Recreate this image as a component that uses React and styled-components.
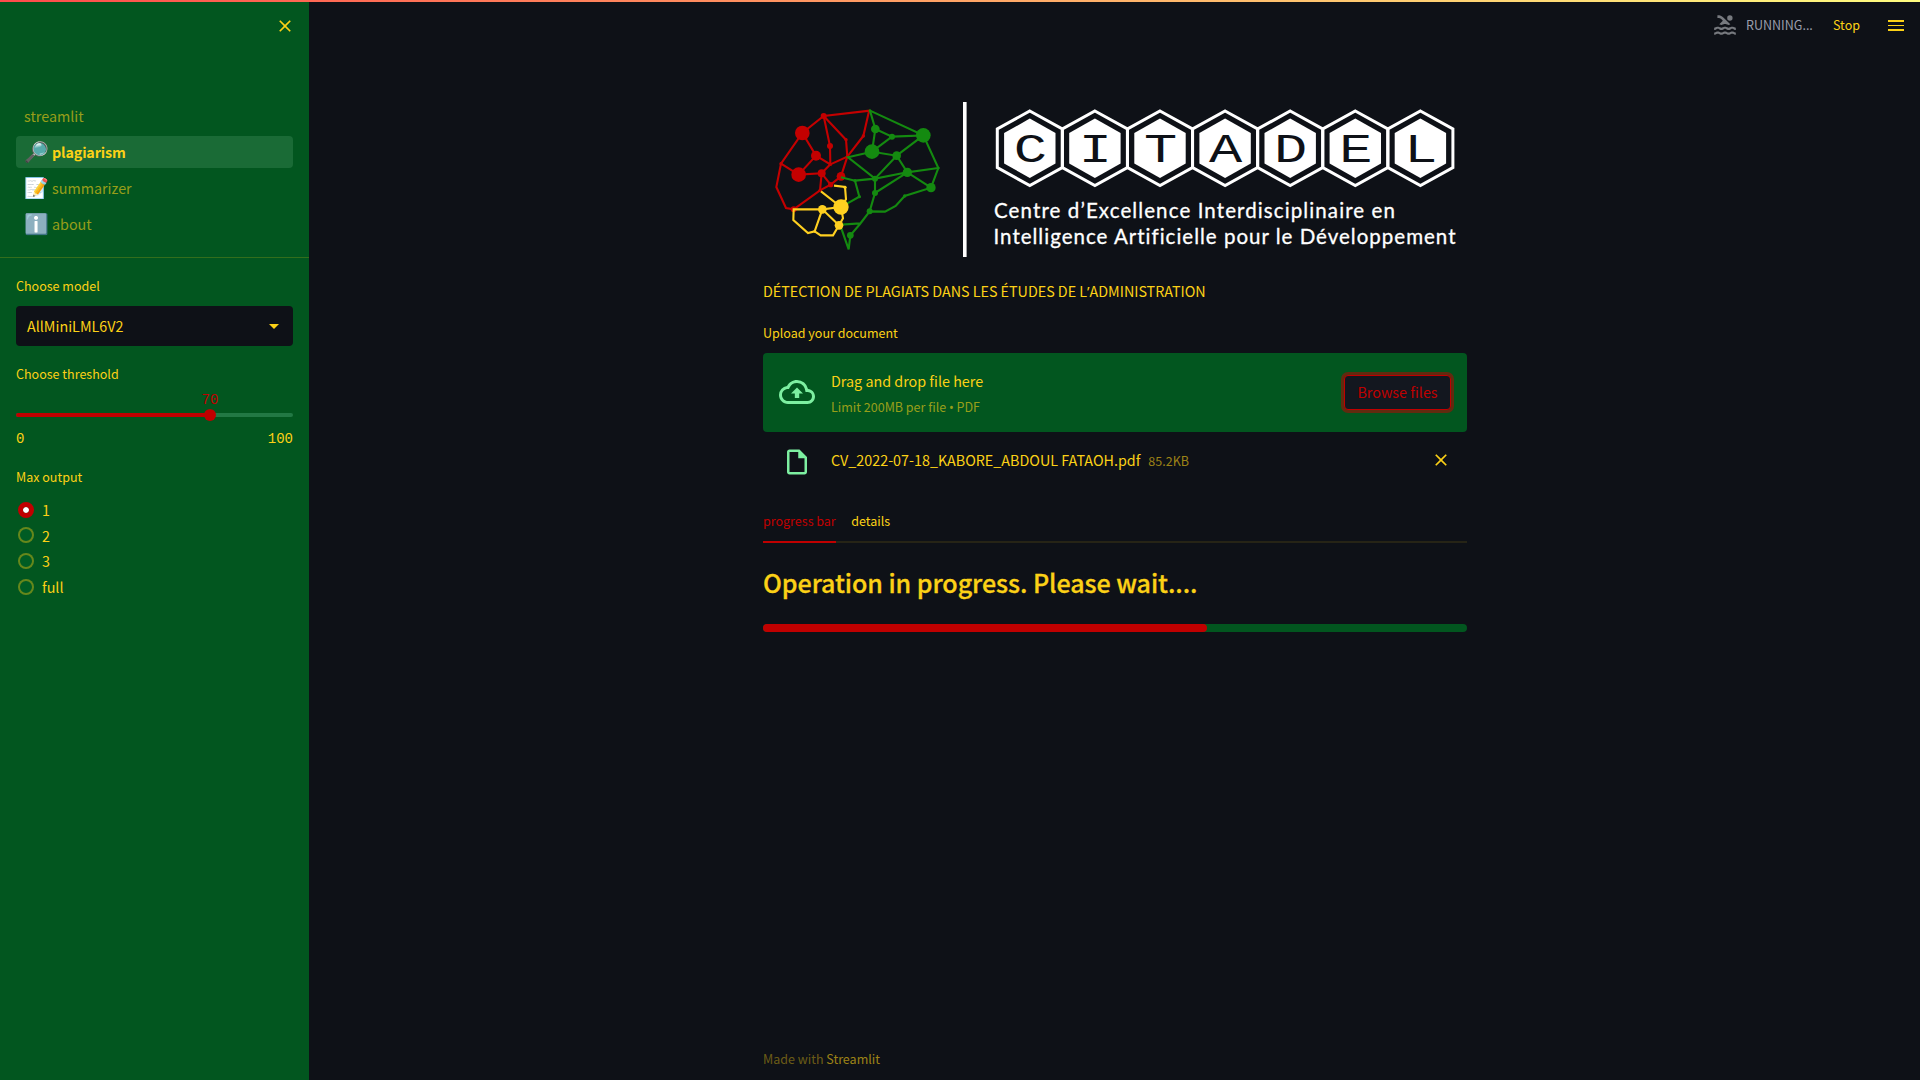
import React from "react";
import styled, { createGlobalStyle } from "styled-components";
import {
  MdClose,
  MdPool,
  MdOutlineCloudUpload,
  MdOutlineInsertDriveFile,
} from "react-icons/md";

const c = {
  bg: "#0e1117",
  green: "#02561f",
  red: "#c00000",
  text: "#fcd116",
  faded60: "rgba(252, 209, 22, 0.6)",
  faded40: "rgba(252, 209, 22, 0.4)",
  faded20: "rgba(252, 209, 22, 0.2)",
  faded10: "rgba(252, 209, 22, 0.1)",
  mint: "#7defa1",
};

const sans = `"Noto Sans CJK SC", "Source Sans Pro", sans-serif`;
const mono = `"Liberation Mono", "Source Code Pro", monospace`;
const MD = "14.33px";
const SM = "12.53px";

const GlobalStyle = createGlobalStyle`
  * { box-sizing: border-box; }
  body {
    margin: 0;
    background: ${c.bg};
    color: ${c.text};
    font-family: ${sans};
    font-size: ${MD};
    overflow: hidden;
  }
  svg { display: block; }
`;

const Page = styled.div`
  display: flex;
  flex-direction: column;
  height: 100vh;
`;

const Decoration = styled.div`
  flex: none;
  height: 2px;
  background: linear-gradient(90deg, #ff4b4b, #fffd80);
`;

const Body = styled.div`
  display: flex;
  flex: 1;
  min-height: 0;
`;

const Sidebar = styled.aside`
  width: 309px;
  flex: none;
  background: ${c.green};
`;

const SidebarTop = styled.div`
  display: flex;
  justify-content: flex-end;
  height: 96px;
  padding: 14px 14px 0 0;
`;

const NavList = styled.ul`
  list-style: none;
  margin: 0;
  padding: 0 16px 13px;
  border-bottom: 1px solid ${c.faded20};
`;

const NavItem = styled.li`
  display: flex;
  align-items: center;
  gap: 4px;
  height: 32px;
  margin: 2px 0 4px;
  padding: 0 8px;
  border-radius: 4px;
  line-height: 32px;
  color: ${(p) => (p.$active ? c.text : c.faded60)};
  font-weight: ${(p) => (p.$active ? 700 : 400)};
  letter-spacing: ${(p) => (p.$active ? "-0.15px" : "0")};
  background: ${(p) => (p.$active ? "#1a6b36" : "transparent")};
  & + & { margin-top: 0; }
`;

const Emoji = styled.span`
  width: 24px;
  font-family: "Noto Color Emoji", sans-serif;
  font-size: 20px;
  font-weight: 400;
  line-height: 32px;
  letter-spacing: 0;
  color: #fff;
`;

const Controls = styled.div`
  padding: 18px 16px 0;
`;

const Label = styled.div`
  height: 20px;
  line-height: 20px;
  font-size: ${SM};
`;

const Select = styled.div`
  display: flex;
  align-items: center;
  justify-content: space-between;
  height: 40px;
  margin: 10px 0 18px;
  padding: 0 14px 0 11px;
  border-radius: 4px;
  background: ${c.bg};
  line-height: 40px;
`;

const Caret = styled.span`
  border: 5px solid transparent;
  border-top-color: ${c.text};
  border-bottom: 0;
`;

const Slider = styled.div`
  display: flex;
  flex-direction: column;
  height: 83px;
  font-family: ${mono};
  font-size: 14px;
`;

const SliderValue = styled.div`
  width: 60px;
  height: 20px;
  margin: 6px 0 0 164px;
  line-height: 20px;
  text-align: center;
  color: ${c.red};
`;

const Track = styled.div`
  display: flex;
  align-items: center;
  height: 4px;
  margin-top: 3px;
  border-radius: 4px;
  background: #227844;
`;

const TrackFill = styled.div`
  height: 4px;
  border-radius: 4px;
  background: ${c.red};
`;

const Thumb = styled.div`
  flex: none;
  width: 12px;
  height: 12px;
  margin-left: -6px;
  border-radius: 50%;
  background: ${c.red};
`;

const Ticks = styled.div`
  display: flex;
  justify-content: space-between;
  margin-top: 12px;
  line-height: 20px;
`;

const RadioGroup = styled.div`
  margin-top: 10px;
`;

const RadioRow = styled.label`
  display: flex;
  align-items: center;
  gap: 8px;
  height: 25.6px;
  padding-left: 2px;
  line-height: 25.4px;
`;

const RadioMark = styled.span`
  width: 16px;
  height: 16px;
  border-radius: 50%;
  border: ${(p) => (p.$checked ? `5px solid ${c.red}` : `2px solid ${c.faded40}`)};
  background: ${(p) => (p.$checked ? "#fff" : "#005c24")};
  background-clip: padding-box;
`;

const Main = styled.main`
  display: flex;
  flex: 1;
  flex-direction: column;
  min-width: 0;
`;

const Header = styled.header`
  display: flex;
  align-items: center;
  justify-content: flex-end;
  height: 46px;
  padding: 0 16px 0 0;
  font-size: ${SM};
  line-height: 46px;
`;

const Running = styled.span`
  width: 87px;
  margin-left: 8px;
  color: #9a9dab;
`;

const Stop = styled.span`
  width: 55px;
`;

const Menu = styled.div`
  display: flex;
  flex-direction: column;
  gap: 2.6px;
  width: 16px;
  margin-top: 1px;
`;

const MenuBar = styled.span`
  height: 1.7px;
  background: ${c.text};
`;

const Column = styled.div`
  display: flex;
  flex: 1;
  flex-direction: column;
  width: 704px;
  margin-left: 454px;
`;

const LogoBox = styled.div`
  height: 172px;
  margin-top: 44px;
`;

const Title = styled.p`
  height: 26px;
  margin: 14px 0 0;
  line-height: 26px;
  letter-spacing: -0.02px;
`;

const Punct = styled.span`
  font-family: "Noto Sans", sans-serif;
  line-height: 1;
`;

const UploadLabel = styled(Label)`
  margin: 19px 0 10px;
`;

const DropZone = styled.section`
  display: flex;
  align-items: center;
  height: 79px;
  padding: 0 16px;
  border-radius: 4px;
  background: ${c.green};
`;

const IconSlot = styled.div`
  display: flex;
  justify-content: center;
  width: 36px;
  margin-right: 16px;
  color: ${c.mint};
`;

const DropIcon = styled(IconSlot)`
  padding-bottom: 1px;
`;

const DropText = styled.div`
  flex: 1;
`;

const DropHeadline = styled.div`
  height: 26px;
  line-height: 26px;
`;

const DropHint = styled.div`
  height: 24px;
  line-height: 26px;
  font-size: ${SM};
  color: ${c.faded60};
`;

const BrowseButton = styled.button`
  width: 107px;
  height: 35px;
  padding: 0 0 1px;
  border: 1px solid ${c.red};
  border-radius: 4px;
  background: #13171f;
  color: ${c.red};
  font: 400 ${MD} / 32px ${sans};
  box-shadow: 0 0 0 3px rgba(192, 0, 0, 0.5);
`;

const FileRow = styled.div`
  display: flex;
  align-items: center;
  height: 60px;
  padding: 0 16px;
`;

const FileName = styled.div`
  line-height: 24px;
  margin-top: -5px;
`;

const FileSize = styled.div`
  flex: 1;
  margin: -3px 0 0 8px;
  font-size: ${SM};
  line-height: 24px;
  color: ${c.faded60};
`;

const DeleteIcon = styled.div`
  margin-top: -4px;
`;

const Tabs = styled.div`
  display: flex;
  gap: 15.5px;
  height: 43px;
  margin-top: 8px;
  box-shadow: inset 0 -2px 0 ${c.faded10};
`;

const Tab = styled.div`
  height: 43px;
  line-height: 41px;
  font-size: ${SM};
  color: ${(p) => (p.$active ? c.red : c.text)};
  box-shadow: ${(p) => (p.$active ? `inset 0 -2px 0 ${c.red}` : "none")};
`;

const Heading = styled.h2`
  height: 40px;
  margin: 19px 0 22px;
  font-size: 25.06px;
  font-weight: 500;
  line-height: 40px;
  letter-spacing: -0.07px;
  -webkit-text-stroke: 0.3px ${c.text};
`;

const Progress = styled.div`
  height: 8px;
  border-radius: 4px;
  background: ${c.green};
`;

const ProgressFill = styled.div`
  height: 8px;
  border-radius: 4px;
  background: ${c.red};
`;

const Footer = styled.footer`
  margin-top: auto;
  height: 31px;
  font-size: ${SM};
  line-height: 20px;
  color: rgba(252, 209, 22, 0.4);
`;

const FooterLink = styled.a`
  color: rgba(252, 209, 22, 0.6);
`;

const Tagline = styled.text`
  font-family: Lato, sans-serif;
  font-size: 20.5px;
  font-variant-ligatures: none;
  fill: #fff;
  stroke: #fff;
  stroke-width: 0.3px;
`;

const RED = "#c40000";
const GREEN = "#148a10";
const GOLD = "#ffd020";

const brain = [
  {
    color: RED,
    lines: [
      "330,62 191,78 127,129 63,221 49,291 78,354 101,358 180,301 212,284 243,259 262,200",
      "211,223 262,200 310,138 327,64",
      "191,78 210,168 211,223 168,197 127,129",
      "191,78 258,149 262,200",
      "211,223 185,250 116,254 63,221",
      "116,254 168,197",
      "185,250 180,301",
      "185,250 212,284",
    ],
    nodes: [
      [191, 78, 9], [127, 129, 22], [168, 197, 15], [116, 254, 22], [210, 168, 9],
      [185, 250, 12], [243, 259, 13], [212, 284, 8], [101, 358, 9], [258, 149, 5],
      [310, 138, 5], [63, 221, 5], [211, 223, 5], [180, 301, 5], [262, 200, 5],
    ],
  },
  {
    color: GREEN,
    lines: [
      "330,62 490,136 535,234 513,293 434,318 407,348 375,365 329,364 300,402 271,436 266,478 240,404 300,400",
      "330,62 346,117 336,185 410,197 490,136 396,140 346,117",
      "336,185 396,140",
      "336,185 264,202 345,266 410,197 442,247 535,234",
      "442,247 513,293",
      "442,247 345,266 345,309 442,247",
      "345,309 329,364",
      "345,266 285,272 243,262",
      "285,272 298,320 245,350",
    ],
    nodes: [
      [490, 136, 22], [336, 185, 22], [346, 117, 13], [396, 140, 9], [410, 197, 13],
      [442, 247, 14], [513, 293, 14], [345, 266, 9], [345, 309, 9], [329, 364, 9],
      [271, 436, 10], [285, 272, 5], [298, 320, 5], [434, 318, 5], [330, 62, 4],
      [535, 234, 4],
    ],
  },
  {
    color: GOLD,
    lines: [
      "222,287 255,291 258,328 243,351 183,304",
      "243,351 187,358 101,358 100,390 144,429 164,424 187,358 237,406 249,385 243,351",
      "164,424 182,436 219,436 237,406",
    ],
    nodes: [[243, 351, 23], [187, 358, 13], [237, 406, 13], [255, 292, 5], [164, 424, 4]],
  },
];

const hexPoints = (cx, cy, w, side, h) =>
  [[0, -h], [w, -side], [w, side], [0, h], [-w, side], [-w, -side]]
    .map(([x, y]) => `${cx + x},${cy + y}`)
    .join(" ");

function Logo() {
  return (
    <svg width="704" height="172" viewBox="763 92 704 172">
      <g transform="translate(760 90) scale(0.33333)">
        {brain.map((part) => (
          <g key={part.color} fill={part.color} stroke={part.color}>
            {part.lines.map((p) => (
              <polyline key={p} points={p} fill="none" strokeWidth="6.3" />
            ))}
            {part.nodes.map(([x, y, r]) => (
              <circle key={`${x}-${y}`} cx={x} cy={y} r={r} stroke="none" />
            ))}
          </g>
        ))}
      </g>
      <rect x="963" y="102" width="3.6" height="155" fill="#fff" />
      {"CITADEL".split("").map((ch, i) => {
        const cx = 1029.8 + i * 65.1;
        return (
          <g key={i}>
            <polygon
              points={hexPoints(cx, 148.3, 32.5, 19.3, 37.3)}
              fill="none"
              stroke="#fff"
              strokeWidth="3"
            />
            <polygon points={hexPoints(cx, 148.3, 25.7, 15.2, 29.7)} fill="#fff" />
            <text
              transform={`translate(${cx + 0.5} 161.6) scale(1.35 1)`}
              textAnchor="middle"
              fontFamily="Liberation Mono, monospace"
              fontSize="41"
              fill={c.bg}
            >
              {ch}
            </text>
          </g>
        );
      })}
      <Tagline x="994" y="217.7" textLength="401">
        Centre d’Excellence Interdisciplinaire en
      </Tagline>
      <Tagline x="993.5" y="243.7" textLength="462">
        Intelligence Artificielle pour le Développement
      </Tagline>
    </svg>
  );
}

const pages = [
  { name: "streamlit" },
  { name: "plagiarism", icon: "🔎", active: true },
  { name: "summarizer", icon: "📝" },
  { name: "about", icon: "ℹ️" },
];

export default function App() {
  const threshold = 70;
  const progress = 63;
  return (
    <Page>
      <GlobalStyle />
      <Decoration />
      <Body>
        <Sidebar>
          <SidebarTop>
            <MdClose size={20} />
          </SidebarTop>
          <NavList>
            {pages.map((p) => (
              <NavItem key={p.name} $active={p.active}>
                {p.icon && <Emoji>{p.icon}</Emoji>}
                {p.name}
              </NavItem>
            ))}
          </NavList>
          <Controls>
            <Label>Choose model</Label>
            <Select>
              AllMiniLML6V2
              <Caret />
            </Select>
            <Label>Choose threshold</Label>
            <Slider>
              <SliderValue>{threshold}</SliderValue>
              <Track>
                <TrackFill style={{ width: `${threshold}%` }} />
                <Thumb />
              </Track>
              <Ticks>
                <span>0</span>
                <span>100</span>
              </Ticks>
            </Slider>
            <Label>Max output</Label>
            <RadioGroup>
              {["1", "2", "3", "full"].map((o) => (
                <RadioRow key={o}>
                  <RadioMark $checked={o === "1"} />
                  {o}
                </RadioRow>
              ))}
            </RadioGroup>
          </Controls>
        </Sidebar>
        <Main>
          <Header>
            <MdPool size={26} color="#777a7f" />
            <Running>RUNNING...</Running>
            <Stop>Stop</Stop>
            <Menu>
              <MenuBar />
              <MenuBar />
              <MenuBar />
            </Menu>
          </Header>
          <Column>
            <LogoBox>
              <Logo />
            </LogoBox>
            <Title>
              DÉTECTION DE PLAGIATS DANS LES ÉTUDES DE L<Punct>’</Punct>ADMINISTRATION
            </Title>
            <UploadLabel>Upload your document</UploadLabel>
            <DropZone>
              <DropIcon>
                <MdOutlineCloudUpload size={36} />
              </DropIcon>
              <DropText>
                <DropHeadline>Drag and drop file here</DropHeadline>
                <DropHint>
                  Limit 200MB per file <Punct>•</Punct> PDF
                </DropHint>
              </DropText>
              <BrowseButton>Browse files</BrowseButton>
            </DropZone>
            <FileRow>
              <IconSlot>
                <MdOutlineInsertDriveFile size={30} />
              </IconSlot>
              <FileName>CV_2022-07-18_KABORE_ABDOUL FATAOH.pdf</FileName>
              <FileSize>85.2KB</FileSize>
              <DeleteIcon>
                <MdClose size={20} />
              </DeleteIcon>
            </FileRow>
            <Tabs>
              <Tab $active>progress bar</Tab>
              <Tab>details</Tab>
            </Tabs>
            <Heading>Operation in progress. Please wait....</Heading>
            <Progress>
              <ProgressFill style={{ width: `${progress}%` }} />
            </Progress>
            <Footer>
              Made with <FooterLink>Streamlit</FooterLink>
            </Footer>
          </Column>
        </Main>
      </Body>
    </Page>
  );
}
